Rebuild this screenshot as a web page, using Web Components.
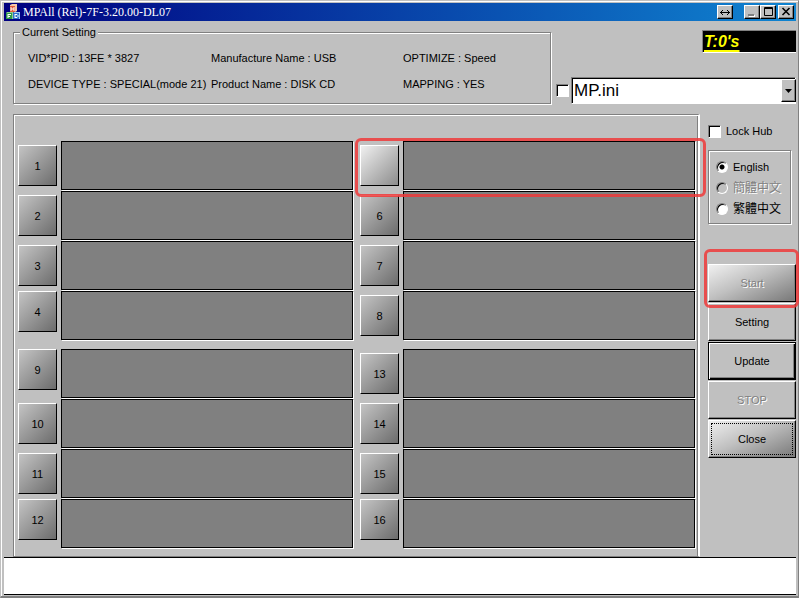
<!DOCTYPE html>
<html lang="en">
<head>
    <meta charset="UTF-8">
    <meta name="viewport" content="width=device-width, initial-scale=1.0">
    <title>MPAll (Rel)-7F-3.20.00-DL07</title>
    <style>
        body {
            --face: #c0c0c0;
            --shade: #808080;
            --red: rgba(238, 58, 58, 0.85);
            margin: 0;
            background: var(--face);
            font: 11px/16px "Liberation Sans", "Noto Sans CJK TC", sans-serif;
            color: #000;
        }
    </style>
</head>
<body>

    <mp-window heading="MPAll (Rel)-7F-3.20.00-DL07">
        <mp-settings slot="settings"></mp-settings>
        <mp-profile slot="profile"></mp-profile>
        <mp-ports slot="ports"></mp-ports>
        <mp-sidebar slot="side"></mp-sidebar>
    </mp-window>

    <script>
        class MpElement extends HTMLElement {
            connectedCallback() {
                if (this.shadowRoot) return;
                const template = document.createElement('template');
                template.innerHTML = this.render();
                this.attachShadow({mode: 'open'});
                this.shadowRoot.appendChild(template.content.cloneNode(true));
            }
        }

        // the frame: title bar, content area, log box
        class MpWindow extends MpElement {
            render() {
                return `
                <style>
                :host {
                    display: flex;
                    flex-direction: column;
                    box-sizing: border-box;
                    min-height: 100vh;
                    padding: 2px 2px 1px 3px;
                    border: 1px solid var(--face);
                    border-right-color: var(--shade);
                    border-bottom: 2px solid var(--shade);
                    box-shadow: inset 1px 1px #fff;
                }
                header {
                    display: flex;
                    align-items: center;
                    height: 18px;
                    padding: 0 2px;
                    background: linear-gradient(90deg, #000080, #1084d0);
                    color: #fff;
                }
                h1 {
                    flex: 1;
                    margin: 0 0 0 2px;
                    font: 12px/18px "Liberation Serif", serif;
                }
                header button {
                    box-sizing: border-box;
                    width: 16px;
                    height: 14px;
                    padding: 0;
                    border: 1px solid;
                    border-color: #fff #000 #000 #fff;
                    box-shadow: inset -1px -1px var(--shade);
                    background: var(--face);
                }
                header button svg { display: block; }
                .swap { margin-right: 11px; }
                .close { margin-left: 2px; }
                .top {
                    display: grid;
                    grid-template-columns: 538fr 245fr;
                    padding: 4px 0 10px 9px;
                }
                .main {
                    display: grid;
                    grid-template-columns: minmax(0, 1fr) 88px;
                    gap: 8px;
                    padding-left: 9px;
                }
                textarea {
                    flex: 1;
                    box-sizing: border-box;
                    width: 100%;
                    min-height: 38px;
                    border: solid #000;
                    border-width: 1px 0;
                    border-radius: 0;
                    background: #fff;
                    resize: none;
                    outline: 0;
                }
                </style>
                <header>
                    <svg width="15" height="16" viewBox="0 0 15 16">
                        <path d="M4 1l2-1h5v7l-2 1H4z" fill="#f4c9a8"/>
                        <path d="M4 2h5v6H4z" fill="#e05a38"/>
                        <path d="M5 3v4M8 3v4M5 5h3" stroke="#fff"/>
                        <path d="M0 9l1-1h6v7H0z" fill="#8ed08e"/>
                        <path d="M0 9h6v6H0z" fill="#2f9a4a"/>
                        <path d="M2 14v-4M2 10.500h3M2 12.500h2" stroke="#fff"/>
                        <path d="M7 9l1-1h6v7H7z" fill="#9cc8f4"/>
                        <path d="M7 9h6v6H7z" fill="#2b70cc"/>
                        <path d="M9 10v4M9 10.500h2l1 1v1l-1 1H9" stroke="#fff" fill="none"/>
                    </svg>
                    <h1>${this.getAttribute('heading')}</h1>
                    <button class="swap" aria-label="Swap"><svg width="14" height="12"><path d="M2 6.500h10M5 4L2.500 6.500 5 9M9 4l2.500 2.500L9 9" fill="none" stroke="#000"/></svg></button>
                    <button aria-label="Minimize"><svg width="14" height="12"><path d="M4 10h6" stroke="#fff" stroke-width="2"/><path d="M3 9h6" stroke="#808080" stroke-width="2"/></svg></button>
                    <button aria-label="Maximize"><svg width="14" height="12"><path d="M3.500 1.500h8v8h-8zM3 2.500h9" fill="none" stroke="#000"/></svg></button>
                    <button class="close" aria-label="Close window"><svg width="14" height="12"><path d="M3.500 2l7 7M10.500 2l-7 7" stroke="#000" stroke-width="1.600"/></svg></button>
                </header>
                <div class="top">
                    <slot name="settings"></slot>
                    <slot name="profile"></slot>
                </div>
                <div class="main">
                    <slot name="ports"></slot>
                    <slot name="side"></slot>
                </div>
                <textarea aria-label="Log" readonly></textarea>`;
            }
        }

        class MpSettings extends MpElement {
            render() {
                return `
                <style>
                :host { display: block; }
                fieldset {
                    display: grid;
                    grid-template-columns: 183fr 192fr 147fr;
                    row-gap: 10px;
                    margin: 0;
                    padding: 11px 0 11px 14px;
                    min-width: 0;
                    border: 1px solid var(--shade);
                    box-shadow: 1px 1px #fff, inset 1px 1px #fff;
                }
                legend {
                    margin-left: -8px;
                    padding: 0 2px;
                    line-height: 14px;
                    background: var(--face);
                }
                span { white-space: nowrap; }
                </style>
                <fieldset>
                    <legend>Current Setting</legend>
                    <span>VID*PID : 13FE * 3827</span>
                    <span>Manufacture Name : USB</span>
                    <span>OPTIMIZE : Speed</span>
                    <span>DEVICE TYPE : SPECIAL(mode 21)</span>
                    <span>Product Name : DISK CD</span>
                    <span>MAPPING : YES</span>
                </fieldset>`;
            }
        }

        // rules shared by every tick box
        const checkStyle = `
            input[type=checkbox] {
                appearance: none;
                flex: none;
                box-sizing: border-box;
                width: 13px;
                height: 13px;
                margin: 0;
                border: 1px solid;
                border-color: var(--shade) #fff #fff var(--shade);
                box-shadow: inset 1px 1px #000;
                background: #fff;
            }`;

        class MpProfile extends MpElement {
            render() {
                return `
                <style>
                :host {
                    display: flex;
                    flex-direction: column;
                    justify-content: space-between;
                    padding: 5px 0 0 5px;
                }
                ${checkStyle}
                output {
                    align-self: flex-end;
                    box-sizing: border-box;
                    width: 94px;
                    height: 23px;
                    padding-left: 1px;
                    border: solid;
                    border-width: 1px 0 1px 1px;
                    border-color: var(--shade) #fff #fff var(--shade);
                    background: #000;
                    color: #ff0;
                    font: italic bold 16px/21px "Liberation Sans", sans-serif;
                    text-decoration: underline 2px;
                    text-underline-offset: 3px;
                    text-decoration-skip-ink: none;
                }
                .row { display: flex; align-items: center; gap: 2px; }
                .combo { flex: 1; display: grid; grid-template-columns: 1fr 15px; }
                select {
                    grid-area: 1 / 1 / 2 / 3;
                    appearance: none;
                    box-sizing: border-box;
                    width: 100%;
                    height: 27px;
                    padding: 0 18px 0 2px;
                    border: 1px solid;
                    border-color: var(--shade) #fff #fff var(--shade);
                    border-radius: 0;
                    box-shadow: inset 1px 1px #000;
                    background: #fff;
                    color: #000;
                    font: 17px/24px "Liberation Sans", sans-serif;
                }
                i {
                    grid-area: 1 / 2;
                    display: grid;
                    place-items: center;
                    margin: 2px 0;
                    border: 1px solid;
                    border-color: #fff #000 #000 #fff;
                    box-shadow: inset -1px -1px var(--shade);
                    background: var(--face);
                    pointer-events: none;
                }
                </style>
                <output>T:0's</output>
                <div class="row">
                    <input type="checkbox" aria-label="Use profile">
                    <div class="combo">
                        <select aria-label="Profile"><option>MP.ini</option></select>
                        <i><svg width="8" height="4"><path d="M0 0h7L3.500 4z"/></svg></i>
                    </div>
                </div>`;
            }
        }

        class MpPort extends MpElement {
            render() {
                return `
                <style>
                :host { display: flex; align-items: center; gap: 4px; height: 49px; }
                :host([raised]) { align-items: flex-start; }
                button {
                    flex: none;
                    box-sizing: border-box;
                    width: 39px;
                    height: 41px;
                    padding: 0;
                    border: 1px solid;
                    border-color: #fff #000 #000 #fff;
                    background: linear-gradient(135deg, #c4c4c4, #6c6c6c);
                    color: #000;
                    font: inherit;
                }
                :host([lit]) button { background: linear-gradient(135deg, #f0f0f0, #8c8c8c); }
                div {
                    flex: 1;
                    align-self: stretch;
                    border: 1px solid #000;
                    box-shadow: 1px 1px #fff;
                    background: var(--shade);
                }
                </style>
                <button aria-label="Port"><slot></slot></button>
                <div></div>`;
            }
        }

        class MpPorts extends MpElement {
            render() {
                return `
                <style>
                :host {
                    display: flex;
                    flex-direction: column;
                    gap: 9px;
                    padding: 26px 3px 8px 4px;
                    border: 1px solid var(--shade);
                    border-width: 1px 2px 1px 1px;
                    border-right-color: #fff;
                    box-shadow: inset 1px 1px #fff, inset -1px 0 var(--shade), 0 1px #fff;
                }
                section {
                    position: relative;
                    display: grid;
                    grid-template: repeat(4, auto) / 1fr 1fr;
                    grid-auto-flow: column;
                    gap: 1px 7px;
                }
                .mark {
                    position: absolute;
                    grid-area: 1 / 2 / 2 / 3;
                    inset: -3px -11px -7px -5px;
                    border: 3px solid var(--red);
                    border-radius: 6px;
                    pointer-events: none;
                }
                </style>
                <section>
                    <mp-port>1</mp-port>
                    <mp-port>2</mp-port>
                    <mp-port>3</mp-port>
                    <mp-port raised>4</mp-port>
                    <mp-port lit></mp-port>
                    <mp-port>6</mp-port>
                    <mp-port>7</mp-port>
                    <mp-port>8</mp-port>
                    <div class="mark"></div>
                </section>
                <section>
                    <mp-port raised>9</mp-port>
                    <mp-port>10</mp-port>
                    <mp-port>11</mp-port>
                    <mp-port raised>12</mp-port>
                    <mp-port>13</mp-port>
                    <mp-port>14</mp-port>
                    <mp-port>15</mp-port>
                    <mp-port raised>16</mp-port>
                </section>`;
            }
        }

        class MpSidebar extends MpElement {
            render() {
                return `
                <style>
                :host { display: block; padding-top: 9px; }
                ${checkStyle}
                label { display: flex; align-items: center; gap: 5px; }
                fieldset {
                    display: flex;
                    flex-direction: column;
                    gap: 5px;
                    margin: 11px 5px 40px 0;
                    padding: 8px 0 6px 7px;
                    min-width: 0;
                    border: 1px solid var(--shade);
                    box-shadow: 1px 1px #fff, inset 1px 1px #fff;
                }
                input[type=radio] {
                    appearance: none;
                    flex: none;
                    box-sizing: border-box;
                    width: 12px;
                    height: 12px;
                    margin: 0;
                    border: 1px solid;
                    border-color: var(--shade) #fff #fff var(--shade);
                    border-radius: 50%;
                    box-shadow: inset 1px 1px #000;
                    background: #fff;
                }
                input[type=radio]:checked { background: radial-gradient(#000 2px, #fff 3px); }
                input[type=radio]:disabled { background: var(--face); }
                .zh { font-size: 12px; }
                .off, button:disabled { color: var(--shade); text-shadow: 1px 1px #fff; }
                .stack { display: grid; gap: 1px; }
                button {
                    display: block;
                    box-sizing: border-box;
                    width: 100%;
                    height: 38px;
                    padding: 0;
                    border: 1px solid;
                    border-color: #fff #000 #000 #fff;
                    box-shadow: inset -1px -1px var(--shade);
                    background: var(--face);
                    color: #000;
                    font: inherit;
                }
                .shiny { background: linear-gradient(155deg, #f0f0f0, #c0c0c0 45%, #787878); }
                .default {
                    border-color: #000;
                    box-shadow: inset 1px 1px #fff, inset -1px -1px #000, inset -2px -2px var(--shade);
                }
                .focus { outline: 1px dotted #000; outline-offset: -4px; }
                .marked { position: relative; }
                .mark {
                    position: absolute;
                    inset: -15px -3px -6px -4px;
                    border: 3px solid var(--red);
                    border-radius: 6px;
                    pointer-events: none;
                    z-index: 1;
                }
                </style>
                <label><input type="checkbox">Lock Hub</label>
                <fieldset aria-label="Language">
                    <label><input type="radio" name="lang" checked>English</label>
                    <label class="zh off"><input type="radio" name="lang" disabled>簡體中文</label>
                    <label class="zh"><input type="radio" name="lang">繁體中文</label>
                </fieldset>
                <div class="stack">
                    <div class="marked">
                        <button class="shiny" disabled>Start</button>
                        <div class="mark"></div>
                    </div>
                    <button>Setting</button>
                    <button class="default">Update</button>
                    <button disabled>STOP</button>
                    <button class="shiny focus">Close</button>
                </div>`;
            }
        }

        customElements.define('mp-window', MpWindow);
        customElements.define('mp-settings', MpSettings);
        customElements.define('mp-profile', MpProfile);
        customElements.define('mp-port', MpPort);
        customElements.define('mp-ports', MpPorts);
        customElements.define('mp-sidebar', MpSidebar);
    </script>
</body>
</html>
